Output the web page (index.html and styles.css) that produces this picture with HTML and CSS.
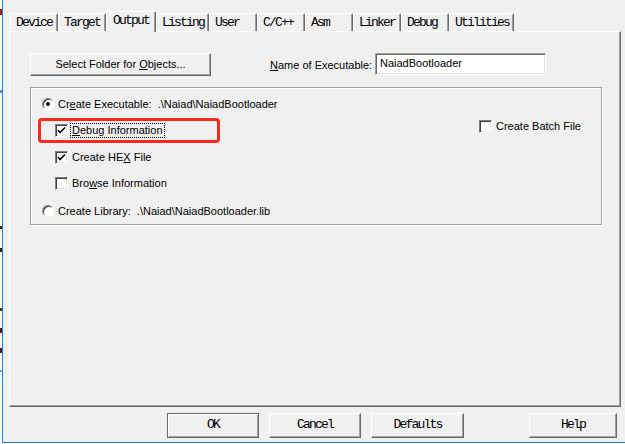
FILE: index.html
```html
<!DOCTYPE html>
<html>
<head>
<meta charset="utf-8">
<link rel="stylesheet" href="styles.css">
</head>
<body>
<div class="screen">
  <div class="edge"></div>
  <div class="window">
    <div class="tabs">
      <div class="tab">Device</div>
      <div class="tab">Target</div>
      <div class="tab selected">Output</div>
      <div class="tab">Listing</div>
      <div class="tab">User</div>
      <div class="tab">C/C++</div>
      <div class="tab">Asm</div>
      <div class="tab">Linker</div>
      <div class="tab">Debug</div>
      <div class="tab">Utilities</div>
    </div>
    <div class="panel">
      <div class="toprow">
        <div class="btn folder"><span>Select Folder for <u>O</u>bjects...</span></div>
        <div class="namelabel"><span><u>N</u>ame of Executable:</span></div>
        <div class="input">NaiadBootloader</div>
      </div>
      <div class="group">
        <div class="row r1 radiorow">
          <span class="radio on"></span>
          <span class="txt">Cr<u>e</u>ate Executable:&nbsp; .\Naiad\NaiadBootloader</span>
        </div>
        <div class="row r2 splitrow">
          <div class="checkrow">
            <span class="check on"><svg viewBox="0 0 13 13" width="13" height="13"><path d="M3 6 L5 8.5 L10 3.5" fill="none" stroke="#000" stroke-width="1.6"/></svg></span>
            <span class="txt focus"><u>D</u>ebug Information</span>
          </div>
          <div class="checkrow batch">
            <span class="check"></span>
            <span class="txt">Create Batch File</span>
          </div>
        </div>
        <div class="row r3 checkrow">
          <span class="check on"><svg viewBox="0 0 13 13" width="13" height="13"><path d="M3 6 L5 8.5 L10 3.5" fill="none" stroke="#000" stroke-width="1.6"/></svg></span>
          <span class="txt">Create HE<u>X</u> File</span>
        </div>
        <div class="row r4 checkrow">
          <span class="check"></span>
          <span class="txt">Bro<u>w</u>se Information</span>
        </div>
        <div class="row r5 radiorow">
          <span class="radio"></span>
          <span class="txt">Create Library:&nbsp; .\Naiad\NaiadBootloader.lib</span>
        </div>
      </div>
    </div>
    <div class="buttons">
      <div class="btn mono default ok">OK</div>
      <div class="btn mono cancel">Cancel</div>
      <div class="btn mono defaults">Defaults</div>
      <div class="btn mono help">Help</div>
    </div>
  </div>
  <div class="highlight"></div>
</div>
</body>
</html>
```

FILE: styles.css
```css
* { box-sizing: border-box; }
html, body { margin: 0; padding: 0; background: #fff; }
body { width: 625px; height: 444px; overflow: hidden; }

.screen {
  position: relative;
  display: flex;
  width: 625px;
  height: 444px;
  background: #fff;
  font-family: "Liberation Sans", Arial, sans-serif;
  font-size: 11px;
  color: #000;
}

.edge {
  width: 2px;
  height: 443px;
  background:
    linear-gradient(to bottom,
      transparent 0 9px, #a01818 9px 15px, transparent 15px 90px,
      #5a8ac0 90px 93px, transparent 93px 226px, #222 226px 229px,
      transparent 229px 248px, #222 248px 252px, transparent 252px 308px,
      #333 308px 311px, transparent 311px 328px, #4a1040 328px 333px,
      transparent 333px 348px, #4a1040 348px 353px, transparent 353px 370px,
      #5aa0e0 370px 372px, transparent 372px);
}

.window {
  width: 623px;
  height: 443px;
  background: #f0f0f0;
  border-left: 1px solid #1a80d6;
  border-bottom: 1px solid #1a80d6;
  display: flex;
  flex-direction: column;
  padding-top: 11px;
}

.mono {
  font-family: "Liberation Mono", "Courier New", monospace;
  font-size: 13px;
  letter-spacing: -1.8px;
}

.tabs {
  display: flex;
  align-items: flex-end;
  height: 20px;
  margin-left: 7px;
  position: relative;
  z-index: 1;
}
.tab {
  font-family: "Liberation Mono", "Courier New", monospace;
  font-size: 13px;
  letter-spacing: -1.8px;
  white-space: pre;
  min-width: 48px;
  height: 18px;
  line-height: 17px;
  padding: 0 4px 0 5px;
  border-top: 1px solid #fff;
  border-left: 1px solid #fff;
  border-right: 1px solid #696969;
  box-shadow: inset -1px 0 #a0a0a0;
  background: #f0f0f0;
  border-radius: 2px 2px 0 0;
}
.tab.selected {
  height: 21px;
  width: 50px;
  margin: 0 0 -1px;
  line-height: 18px;
  padding: 0 0 0 6px;
  position: relative;
  z-index: 2;
}

.panel {
  margin-left: 6px;
  width: 612px;
  height: 376px;
  border-top: 1px solid #fff;
  border-left: 1px solid #fff;
  border-right: 1px solid #696969;
  border-bottom: 1px solid #696969;
  box-shadow: inset -1px -1px #a0a0a0;
  padding: 21px 0 0 20px;
}

.toprow {
  display: flex;
  align-items: center;
  height: 23px;
}

.btn {
  display: flex;
  align-items: center;
  justify-content: center;
  background: #f0f0f0;
  border-top: 1px solid #fff;
  border-left: 1px solid #fff;
  border-right: 1px solid #696969;
  border-bottom: 1px solid #696969;
  box-shadow: inset -1px -1px #a0a0a0;
}
.btn.default {
  border: 1px solid #696969;
  box-shadow: inset 1px 1px #fff, inset -1px -1px #a0a0a0;
}
.folder {
  width: 181px;
  height: 23px;
  padding-bottom: 1px;
}
.namelabel {
  margin-left: 59px;
  width: 105px;
  padding-top: 1px;
}
.input {
  width: 171px;
  height: 22px;
  margin-top: -1px;
  background: #fff;
  border-top: 1px solid #a0a0a0;
  border-left: 1px solid #a0a0a0;
  border-right: 1px solid #fff;
  border-bottom: 1px solid #fff;
  box-shadow: inset 1px 1px #696969, inset -1px -1px #e3e3e3;
  padding: 2px 0 0 4px;
  line-height: 15px;
}

.group {
  margin-top: 11px;
  width: 572px;
  height: 138px;
  border: 1px solid #a0a0a0;
  box-shadow: inset 1px 1px #fff, 1px 1px #fff;
  padding-left: 11px;
}

.row { display: flex; align-items: center; height: 14px; }
.r1 { margin-top: 9px; }
.r2 { margin-top: 12px; }
.r3 { margin-top: 13px; }
.r4 { margin-top: 12px; }
.r5 { margin-top: 14px; }

.checkrow { display: flex; align-items: center; }
.row.checkrow { padding-left: 13px; }
.splitrow { display: grid; grid-template-columns: 424px auto; padding-left: 13px; }
.batch { margin-top: -8px; }

.radio {
  width: 12px;
  height: 12px;
  border-radius: 50%;
  background: #fff;
  border: 1px solid #808080;
  box-shadow: inset 1px 1px #404040;
  border-right-color: #fff;
  border-bottom-color: #fff;
  position: relative;
  flex: none;
}
.radio.on::after {
  content: "";
  position: absolute;
  left: 3px;
  top: 3px;
  width: 4px;
  height: 4px;
  border-radius: 50%;
  background: #000;
}
.radiorow .txt { margin-left: 4px; }

.check {
  width: 13px;
  height: 13px;
  flex: none;
  background: #fff;
  border-top: 1px solid #808080;
  border-left: 1px solid #808080;
  border-right: 1px solid #fff;
  border-bottom: 1px solid #fff;
  box-shadow: inset 1px 1px #404040, inset -1px -1px #e3e3e3;
  position: relative;
}
.check svg { position: absolute; left: -1px; top: -1px; }
.checkrow .txt { margin-left: 4px; line-height: 13px; }
.checkrow .txt.focus {
  margin-left: 2px;
  padding: 0 1px;
  border: 1px dotted #000;
}

.buttons {
  display: flex;
  margin-top: 6px;
  padding-left: 164px;
  height: 25px;
}
.buttons .btn { height: 25px; width: 92px; padding-bottom: 2px; }
.buttons .cancel { margin-left: 10px; }
.buttons .defaults { margin-left: 10px; width: 93px; }
.buttons .help { margin-left: 65px; width: 88px; }

.highlight {
  position: absolute;
  left: 38px;
  top: 118px;
  width: 182px;
  height: 25px;
  border: 3px solid #f42a1c;
  border-radius: 4px;
}
```
